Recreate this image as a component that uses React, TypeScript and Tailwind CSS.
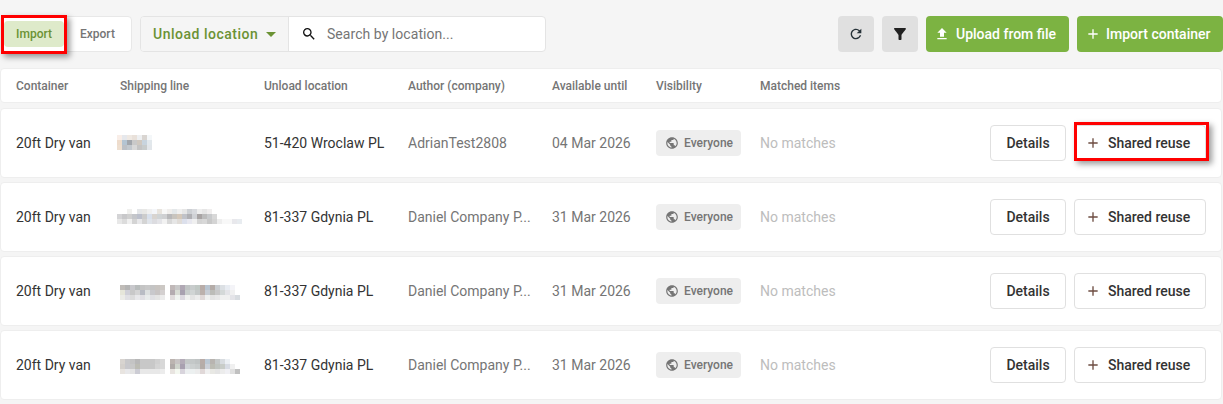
import { MdAdd, MdArrowDropDown, MdFileUpload, MdFilterAlt, MdPublic, MdRefresh, MdSearch } from "react-icons/md";

const columns = [
  { label: "Container", width: "w-[104px]" },
  { label: "Shipping line", width: "w-[144px]" },
  { label: "Unload location", width: "w-[144px]" },
  { label: "Author (company)", width: "w-[144px]" },
  { label: "Available until", width: "w-[104px]" },
  { label: "Visibility", width: "w-[104px]" },
  { label: "Matched items", width: "w-[104px]" },
];

// the shipping line names are pixelated out in the picture
const blur1 = [
  "f9eee8 e6e8ec efe9e3 e9e1da eef0f2 d9d5d1 f4f7f9",
  "eedccc b4c4d2 a2a6ac c9c9c9 cfc8c0 c8d4de e2e8ec",
  "eedfd0 bcc0c6 c2c8ce d8d8d8 c4c4c4 c8cccc e2e6ea",
];
const blur2 = [
  "ffffff ffffff f0f0ee ffffff e4e6e8 e8e8e6 f0f0f0 f4f6fa e8e4de f8f8f8 f0eeec e4e8ea f0f0f0 e6e6e6 cdd0d4 d8dade eeeeee e6e6e6 f0eeee ffffff ffffff ffffff ffffff ffffff ffffff",
  "d4d4d6 c8c8ca d0d0d0 c4c6ca bcc0cc cccccc d8e0ec d8d4d0 d0d4d6 cfd0d2 b8b8ba c8c4be d4c8ba c0c2c8 b0b0b4 d0d2d6 a8a4a4 bcbcbc c8cacc d8d8d8 ffffff ffffff ffffff ffffff ffffff",
  "e8e8e8 dcdcdc f0f0f0 d4d4d4 e8e8ea d4d4d4 e0e4ea dcdce0 e4e4e8 f2f2f2 d8d8d8 e6e6e6 e0dcd8 dce0ec e8e8f0 f0f0f0 d4d4d4 d8d8d8 c8c8c8 d4d4d4 eeeeee f8f8f8 f8f8f8 e8e8ec e8ecf0",
];
const blur3 = [
  "ffffff c0bcb8 b4b4b4 c8c8cc b8bcbc c4c4c4 c8c8c8 c4c4c4 c8c4c0 ccc8c4 ffffff c0b8b8 c8c8c8 b0a8b4 c0c4c4 c8cccc c0c8c4 b8aca8 b8c4d0 b4aca8 c8ccd0 dce0e4 e8ecf2 f4f4f8 ffffff",
  "ffffff e6e6da d0d0d8 c8c8c8 d4d4d4 b8bcc4 dce0e0 c8c8cc c8c4c4 d4d0d0 ffffff b4acb0 d8dcd4 a8a0b0 c8cccc d0d4d4 c4c8c8 bcb0ac c8ccd4 bcbcb8 c8c8c8 d4d8d8 e4e4e8 f0f0f0 ffffff",
  "ffffff ecece8 e0e0e4 dcdcdc e8e8ea e0e0e4 e8ecec e0e0e4 e4e4e4 ececec ffffff e0dcdc f0f4f0 dcd8e0 f0f0f0 e4e4e4 ececec e0d8d8 f0f0f0 e4e4e4 e8e8e8 f0f0f0 f0f0f0 e4e4e8 d8dce0",
];
const blur4 = [
  "ffffff d8d4d0 c8c8ca c4c4c4 b8b8b8 c8c8c8 c8c8c8 c8c8c8 d0d0d0 d8d8d8 ffffff bcb4b0 c8c4c4 b4acb8 c4c8c8 c4c8c8 c0c4c4 b8aca8 bcc8d4 b8b4b0 c4c8c8 d8dce0 ecf0f4 ffffff ffffff",
  "ffffff d4d0cc c8c8cc c8c8c8 bcbcb4 c8c8c8 c8c8c8 c8c8c8 d4d4d4 d8d8d8 ffffff b0aaa8 d0d4cc a8a0b0 d0d4d8 ccd0d0 c8cccc b4aca8 ccd0d8 bcbcb4 c0c4c0 c8ccc8 d8dce4 f0f0f0 ffffff",
  "ffffff e8e4e0 e8e8ea e4e4e4 ccccd4 e8e8e8 e8e8e8 e8e8e8 e8e8e8 ececec ffffff e8e4e0 f4f8f0 d8d4dc eceff0 ecf0f0 ececec e0d8d8 f0f0f0 e8e8e4 e4e4e4 ececec f0f0f4 e0e0e0 c0c0c0",
];

const rows = [
  { blur: blur1, blurClass: "ml-[-3px] mt-[-2px]", location: "51-420 Wroclaw PL", author: "AdrianTest2808", until: "04 Mar 2026", marked: true },
  { blur: blur2, blurClass: "ml-[-3px] mt-[-1px]", location: "81-337 Gdynia PL", author: "Daniel Company P...", until: "31 Mar 2026", marked: false },
  { blur: blur3, blurClass: "ml-[-5px] mt-[3px]", location: "81-337 Gdynia PL", author: "Daniel Company P...", until: "31 Mar 2026", marked: false },
  { blur: blur4, blurClass: "ml-[-5px] mt-[3px]", location: "81-337 Gdynia PL", author: "Daniel Company P...", until: "31 Mar 2026", marked: false },
];

function Pixelated({ blur, className }: { blur: string[]; className: string }) {
  return (
    <svg width="130" height="15" viewBox="0 0 130 15" shapeRendering="crispEdges" className={className}>
      {blur.map((line, y) =>
        line.split(" ").map((c, x) => <rect key={`${x}-${y}`} x={x * 5} y={y * 5} width="5" height="5" fill={`#${c}`} />)
      )}
    </svg>
  );
}

function RedMark({ className }: { className: string }) {
  return <div className={`pointer-events-none absolute border-[3px] border-[#ff0000] shadow-[3px_3px_6px_rgba(0,0,0,0.4)] ${className}`} />;
}

export default function App() {
  return (
    <div className="h-[404px] w-[1223px] overflow-hidden bg-[#f5f5f5] pt-4 font-['Roboto',sans-serif]">
      {/* Toolbar */}
      <div className="flex h-9 items-center">
        <div className="relative ml-[2px] flex h-9 w-[130px] items-center rounded border border-[#e8e8e8] bg-white pl-[1px]">
          <span className="flex h-[26px] w-[60px] items-center justify-center rounded bg-[#deeaca] text-xs font-medium text-[#6b9234]">Import</span>
          <span className="ml-4 text-xs font-medium text-[#757575]">Export</span>
          <RedMark className="left-[-2px] top-[-2px] h-[39px] w-[66px]" />
        </div>

        <div className="ml-2 flex h-9 w-[406px] overflow-hidden rounded border border-[#e4e4e4] bg-white">
          <div className="flex w-[148px] items-center border-r border-[#e4e4e4] bg-[#f5f5f5] pl-3">
            <span className="text-sm font-medium tracking-[0.5px] text-[#6b9234]">Unload location</span>
            <MdArrowDropDown className="ml-[1px] text-[#6b9234]" size={24} />
          </div>
          <div className="flex items-center pl-3 text-sm tracking-[0.05px] text-[#757575]">
            <MdSearch className="text-[#111]" size={16} />
            <span className="ml-[10px]">Search by location...</span>
          </div>
        </div>

        <div className="ml-auto flex items-center gap-2">
          <button className="flex size-9 items-center justify-center rounded bg-[#e0e0e0] text-[#263238]">
            <MdRefresh size={16} />
          </button>
          <button className="flex size-9 items-center justify-center rounded bg-[#e0e0e0] text-[#212121]">
            <MdFilterAlt size={18} />
          </button>
          <button className="flex h-9 w-[143px] items-center gap-[6px] rounded bg-[#7cb342] pl-2 text-sm font-medium text-white">
            <MdFileUpload size={16} />
            Upload from file
          </button>
          <button className="flex h-9 w-[146px] items-center gap-[5px] rounded bg-[#7cb342] pl-2 text-sm font-medium text-white">
            <MdAdd size={16} />
            Import container
          </button>
        </div>
      </div>

      {/* Table */}
      <div className="mt-4 flex h-[35px] w-[1222px] items-center rounded border border-[#eeeeee] bg-white pl-[15px] text-xs font-medium text-[#757575]">
        {columns.map((c) => (
          <div key={c.label} className={c.width}>{c.label}</div>
        ))}
      </div>

      <div className="mt-[5px] flex w-[1222px] flex-col gap-1">
        {rows.map((r, i) => (
          <div key={i} className="flex h-[70px] items-center rounded border border-[#eeeeee] bg-white pl-[15px] pr-[15px] text-sm">
            <div className="w-[104px] text-[#333333]">20ft Dry van</div>
            <div className="w-[144px]">
              <Pixelated blur={r.blur} className={r.blurClass} />
            </div>
            <div className="w-[144px] text-[#333333]">{r.location}</div>
            <div className="w-[144px] text-[#757575]">{r.author}</div>
            <div className="w-[104px] text-[#757575]">{r.until}</div>
            <div className="w-[104px]">
              <span className="inline-flex h-[26px] w-[85px] items-center gap-[5px] rounded bg-[#eeeeee] pl-[9px] text-xs font-medium text-[#757575]">
                <MdPublic size={14} />
                Everyone
              </span>
            </div>
            <div className="w-[104px] text-[#bdbdbd]">No matches</div>
            <div className="ml-auto flex items-center gap-2">
              <button className="h-9 w-[76px] rounded border border-[#e0e0e0] bg-white text-sm font-medium text-[#333333]">Details</button>
              <div className="relative">
                <button className="flex h-9 w-[132px] items-center gap-[7px] rounded border border-[#e0e0e0] bg-white pl-[10px] text-sm font-medium text-[#333333]">
                  <MdAdd className="text-[#6d4c41]" size={16} />
                  Shared reuse
                </button>
                {r.marked && <RedMark className="left-0 top-[-3px] h-[39px] w-[135px]" />}
              </div>
            </div>
          </div>
        ))}
      </div>
    </div>
  );
}
